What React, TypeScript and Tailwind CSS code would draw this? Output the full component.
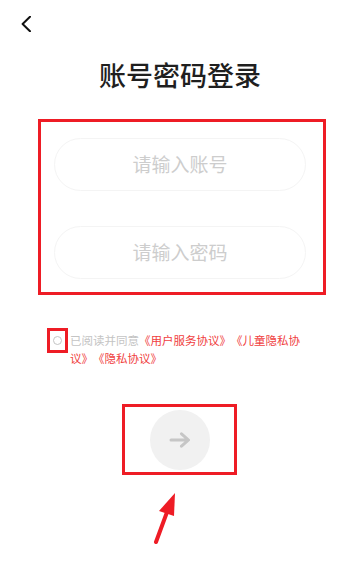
import React from 'react';

const RED = 'border-[#ee1c25]';

const App: React.FC = () => {
  return (
    <div
      className="relative w-[360px] h-[577px] bg-white overflow-hidden"
      style={{ fontFamily: '"Noto Sans CJK SC", "Noto Sans", sans-serif' }}
    >
      {/* Back */}
      <div className="pt-[16px] pl-[21px] h-[32px]">
        <svg width="11" height="16" viewBox="0 0 11 16" fill="none">
          <path d="M9 0.8 L1.6 8 L9 15.2" stroke="#111" strokeWidth="2" strokeLinecap="round" strokeLinejoin="round" />
        </svg>
      </div>

      {/* Title */}
      <h1 className="mt-[25px] text-center text-[27px] leading-[36px] font-medium text-[#1f1f1f]">
        账号密码登录
      </h1>

      {/* Inputs */}
      <div className={`mt-[26px] ml-[38px] w-[288px] h-[176px] border-[3px] ${RED} pt-[16px] pl-[13px] flex flex-col gap-[35px]`}>
        <div className="w-[252px] h-[53px] rounded-full border border-[#f4f4f4] flex items-center justify-center text-[19px] text-[#cdcdcd]">
          请输入账号
        </div>
        <div className="w-[252px] h-[53px] rounded-full border border-[#f4f4f4] flex items-center justify-center text-[19px] text-[#cdcdcd]">
          请输入密码
        </div>
      </div>

      {/* Agreement */}
      <div className="mt-[33px] ml-[47px] flex items-start">
        <div className={`w-[21px] h-[25px] border-[3px] ${RED} flex items-center justify-center shrink-0`}>
          <div className="w-[9px] h-[9px] rounded-full border border-[#c4c4c4]" />
        </div>
        <p className="mt-[3px] ml-[2px] w-[236px] text-[11.5px] leading-[18px] text-[#c4c4c4] [text-spacing-trim:space-all]">
          已阅读并同意<span className="text-[#f04040]">《用户服务协议》《儿童隐私协议》《隐私协议》</span>
        </p>
      </div>

      {/* Submit */}
      <div className={`mt-[37px] ml-[122px] w-[115px] h-[71px] border-[3px] ${RED} flex items-center justify-center`}>
        <div className="w-[60px] h-[60px] rounded-full bg-[#f1f1f1] flex items-center justify-center">
          <svg width="22" height="16" viewBox="0 0 22 16" fill="none">
            <path d="M2 8 H19 M12.5 1.8 L19.5 8 L12.5 14.2" stroke="#c6c6c6" strokeWidth="3" strokeLinecap="round" strokeLinejoin="round" />
          </svg>
        </div>
      </div>

      {/* Annotation arrow */}
      <svg className="absolute left-[150px] top-[488px]" width="32" height="60" viewBox="0 0 32 60" fill="none">
        <path d="M6 54 L20 16" stroke="#ee1c25" strokeWidth="4" strokeLinecap="round" />
        <path d="M25 5 L9 23 L24 28 Z" fill="#ee1c25" />
      </svg>
    </div>
  );
};

export default App;
